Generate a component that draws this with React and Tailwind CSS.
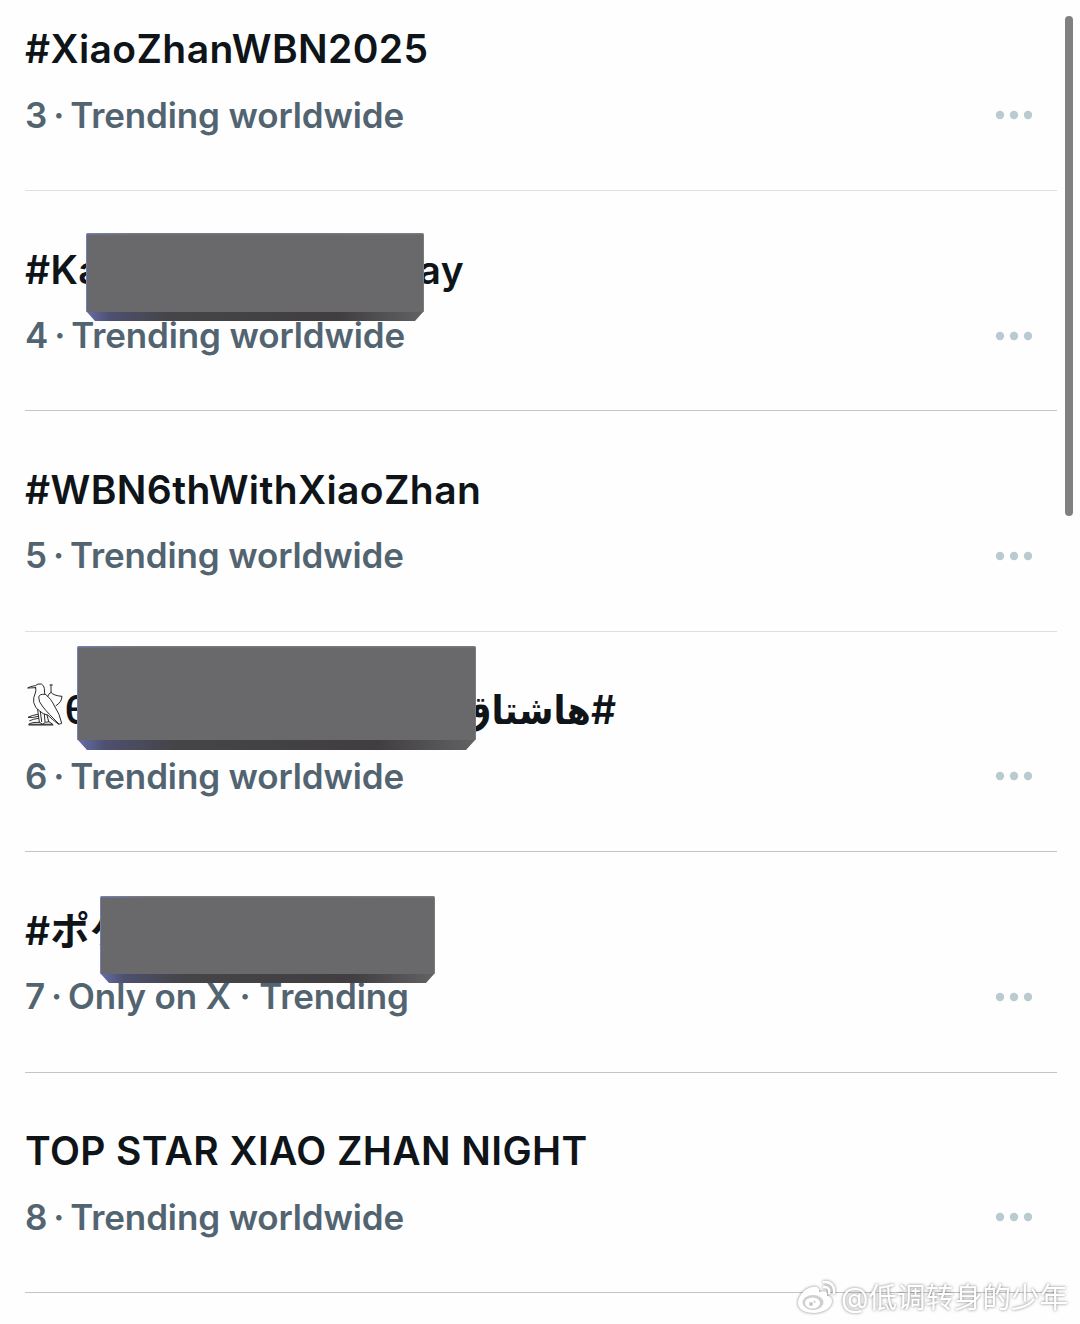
import React from 'react';
import { clsx } from 'clsx';

const trends = [
  { rank: '3', kind: 'plain', title: '#XiaoZhanWBN2025', meta: 'Trending worldwide', line: 'border-[#dedfe0]' },
  { rank: '4', kind: 'latin', meta: 'Trending worldwide', line: 'border-[#c2c4c5]' },
  { rank: '5', kind: 'plain', title: '#WBN6thWithXiaoZhan', meta: 'Trending worldwide', line: 'border-[#dedfe0]' },
  { rank: '6', kind: 'arabic', meta: 'Trending worldwide', line: 'border-[#c2c4c5]' },
  { rank: '7', kind: 'japanese', meta: 'Only on X · Trending', line: 'border-[#c2c4c5]' },
  { rank: '8', kind: 'plain', title: 'TOP STAR XIAO ZHAN NIGHT', meta: 'Trending worldwide', line: 'border-[#c2c4c5]' },
];

// Solid slab with a bevelled bottom edge that hides part of a title
const Slab = ({ id, width, height, bevel, className }) => (
  <svg className={clsx('absolute z-10', className)} width={width} height={height} viewBox={`0 0 ${width} ${height}`}>
    <defs>
      <linearGradient id={`edge-${id}`} x1="0" x2="1" y1="0" y2="0">
        <stop offset="0" stopColor="#6670aa" />
        <stop offset="0.07" stopColor="#4d5070" />
        <stop offset="0.25" stopColor="#454447" />
        <stop offset="0.75" stopColor="#403e41" />
        <stop offset="1" stopColor="#626164" />
      </linearGradient>
      <linearGradient id={`rim-${id}`} x1="0" x2="1" y1="0" y2="0">
        <stop offset="0" stopColor="#7480b4" />
        <stop offset="0.15" stopColor="#77777d" />
        <stop offset="1" stopColor="#7b7a7c" />
      </linearGradient>
    </defs>
    <path d={`M0 ${height - bevel - 1}H${width}L${width - bevel} ${height}H${bevel}Z`} fill={`url(#edge-${id})`} />
    <rect width={width} height={height - bevel} rx="1.5" fill={`url(#rim-${id})`} />
    <rect x="1" y="1.5" width={width - 2} height={height - bevel - 1.5} fill="#69686a" />
  </svg>
);

const BirdGlyph = () => (
  <svg width="36.7" height="42.7" viewBox="50 36 110 128" fill="none" stroke="#1b1d1f" strokeWidth="2.8" strokeLinejoin="round" strokeLinecap="round">
    <path d="M76 50L52 51Q58 46 75 44Q82 37 93 39Q101 43 102 52L103 68Q122 82 134 108Q148 128 154 157L145 160Q126 146 112 132Q98 130 88 120Q74 112 70 94Q68 80 75 66Q78 58 76 50Z" />
    <path d="M103 70Q88 68 85 78Q84 92 98 108Q114 128 145 158" />
    <path d="M82 116L87 154M90 122L94 152M102 130L104 152M110 132L115 152" />
    <path d="M82 130Q66 132 53 139Q68 141 84 136M84 142Q68 144 58 149" />
    <path d="M56 159Q64 153 88 154L96 160Q104 152 116 152L126 159ZM56 162H128" />
    <path d="M119 42H126M122 42V64Q130 74 155 76Q154 94 137 104M122 64Q114 68 112 76" />
  </svg>
);

const TrendTitle = ({ trend }) => {
  if (trend.kind === 'latin') {
    return (
      <>
        <span>#Ka</span>
        <span className="ml-auto">ay</span>
        <Slab id="a" width={338} height={88} bevel={9} className="left-[61px] -top-3" />
      </>
    );
  }
  if (trend.kind === 'arabic') {
    return (
      <>
        <span className="-mt-[11px] pl-[2px]"><BirdGlyph /></span>
        <span className="pl-px">θ</span>
        <span className="ml-auto font-['Inter','DejaVu_Sans_Condensed','DejaVu_Sans',sans-serif] tracking-normal" dir="rtl">#هاشتاق</span>
        <Slab id="b" width={399} height={104} bevel={10} className="left-[52px] -top-10" />
      </>
    );
  }
  if (trend.kind === 'japanese') {
    return (
      <>
        <span>#ポケ</span>
        <Slab id="c" width={335} height={87} bevel={9} className="left-[75px] -top-[10px]" />
      </>
    );
  }
  return <span>{trend.title}</span>;
};

const titleWidth = {
  plain: 'w-full',
  latin: 'w-[439px]',
  arabic: 'w-[591px]',
  japanese: 'w-full',
};

const MoreDots = () => (
  <svg width="38" height="10" viewBox="0 0 38 10" fill="#b9cad0">
    <circle cx="5" cy="5" r="4.2" />
    <circle cx="19" cy="5" r="4.2" />
    <circle cx="33" cy="5" r="4.2" />
  </svg>
);

const TrendRow = ({ trend }) => (
  <li className={clsx('h-[220.4px] border-b pt-[54px]', trend.line)}>
    <div className={clsx('relative flex h-12 items-center whitespace-nowrap text-[39px] font-semibold leading-none tracking-[0.4px] text-[#0f1419]', titleWidth[trend.kind])}>
      <TrendTitle trend={trend} />
    </div>
    <div className="mt-[20.5px] flex h-11 items-center justify-between pr-6">
      <p className="whitespace-nowrap text-[35px] font-[560] leading-none tracking-[-0.13px] text-[#536471]">
        <span>{trend.rank}</span>
        <span className="mx-[6px]">·</span>
        <span>{trend.meta}</span>
      </p>
      <MoreDots />
    </div>
  </li>
);

const Watermark = () => (
  <div className="absolute bottom-[8px] left-[797px] z-20 flex items-center gap-1 text-white [filter:drop-shadow(0_0_1.5px_rgba(0,0,0,0.5))]">
    <svg width="40" height="36" viewBox="0 0 40 36" fill="none">
      <path d="M15 7C8 8 1 16 1 23c0 7 8 10 16 10 9 0 18-5 18-12 0-3-2-5-5-5 1-4-1-6-8-4 1-4-2-6-7-5Z" fill="white" />
      <ellipse cx="16" cy="22.500" rx="10.500" ry="7.500" fill="#cfcfcf" />
      <ellipse cx="15.500" cy="23" rx="7.500" ry="5.500" fill="white" />
      <circle cx="14" cy="24" r="2" fill="#c4c4c4" />
      <circle cx="17.500" cy="21.800" r="1" fill="#c4c4c4" />
      <path d="M27 2c7-1 11 5 10 11M27 7c4 0 6 2 5 6" stroke="white" strokeWidth="2.500" strokeLinecap="round" />
    </svg>
    <span className="whitespace-nowrap text-[28.5px] leading-9">@低调转身的少年</span>
  </div>
);

const App = () => (
  <div className="relative h-[1324px] w-[1080px] overflow-hidden bg-[#fefefe] font-['Inter','Noto_Sans_CJK_SC',sans-serif]">
    <ul className="-mt-[29.4px] ml-[25px] w-[1032px]">
      {trends.map((trend) => (
        <TrendRow key={trend.rank} trend={trend} />
      ))}
    </ul>
    <div className="absolute top-4 left-[1065px] h-[500px] w-2 rounded-full bg-[#808080]" />
    <Watermark />
  </div>
);

export default App;
